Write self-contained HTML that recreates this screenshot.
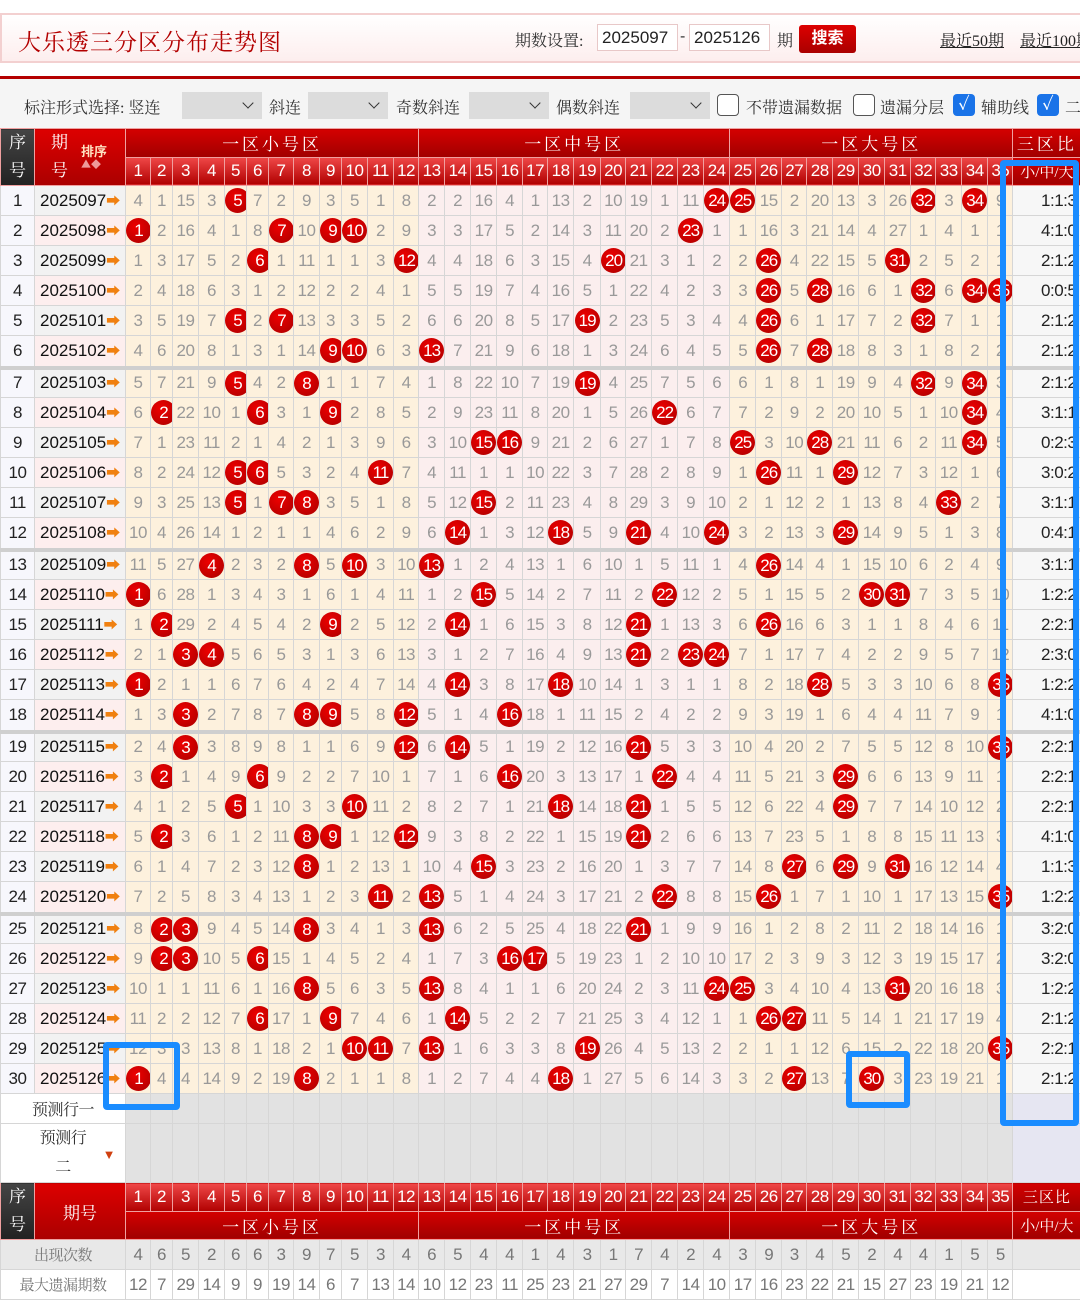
<!DOCTYPE html>
<html><head><meta charset="utf-8">
<style>
*{margin:0;padding:0;box-sizing:border-box}
body{width:1080px;height:1289px;overflow:hidden;background:#fff;font-family:"Liberation Sans","Noto Sans CJK SC",sans-serif;position:relative}
.cn{font-family:"Liberation Serif","Noto Serif CJK SC",serif}
#top{position:absolute;left:0;top:13px;width:1090px;height:50px;border:2px solid #f3d0d0;background:linear-gradient(#fff,#fdeeee);}
#top .t{position:absolute;left:16px;top:9px;font-size:23px;color:#b30000;letter-spacing:1px}
#top .l{position:absolute;top:13px;font-size:16px;color:#333}
#top .in{position:absolute;top:9px;height:27px;border:1px solid #e8c8c8;background:#fff;font-size:17px;padding:3px 4px;color:#222}
#top .btn{position:absolute;left:797px;top:10px;width:57px;height:28px;background:linear-gradient(#d00,#a00);color:#fff;font-size:16px;font-weight:bold;text-align:center;line-height:27px;border-radius:3px}
#top a{position:absolute;top:13px;font-size:16px;color:#222;text-decoration:underline;white-space:nowrap}
#redline{position:absolute;left:0;top:76px;width:1080px;height:3px;background:#b40000}
#filt{position:absolute;left:0;top:79px;width:1080px;height:49px;background:#f5f5f5}
#filt span{position:absolute;top:16px;font-size:16px;color:#333}
#filt .sel{position:absolute;top:13px;height:27px;background:#dcdcdc}
#filt .sel:after{content:"";position:absolute;right:10px;top:7px;width:7px;height:7px;border-right:1.5px solid #333;border-bottom:1.5px solid #333;transform:rotate(45deg)}
#filt .cb{position:absolute;top:15px;width:22px;height:22px;border:1.5px solid #555;border-radius:4px;background:#fff}
#filt .ck{position:absolute;top:15px;width:22px;height:22px;border-radius:4px;background:#1a73e8;color:#fff;font-size:17px;text-align:center;line-height:22px;font-weight:bold}
table{position:absolute;left:0;top:128px;border-collapse:collapse;table-layout:fixed;width:1080px}
td{border:1px solid #d6d6d6;text-align:center;font-size:17px;color:#999;height:30px;padding:0;white-space:nowrap;overflow:hidden;letter-spacing:-0.5px}
td.s{color:#222;background:#f7f7fc}
td.p{color:#111;text-align:left;padding-left:5px;letter-spacing:0}
tr:nth-child(odd) td.p{background:#f2f2f2}
tr:nth-child(even) td.p{background:#fdeeee}
td.p i{font-style:normal;color:#f08010;font-size:14px;font-weight:bold}
td.r{color:#222;background:#f7f7f7;text-align:right;padding-right:4px}
td b{display:inline-block;width:25px;height:25px;border-radius:50%;background:radial-gradient(circle at 40% 35%,#e00,#a80000);color:#fff;font-weight:normal;line-height:25px;font-size:17px;letter-spacing:-1px;vertical-align:middle}
tr.g td{border-bottom:4px solid #cfcfcf;height:32px}
th{font-weight:normal;color:#fff;border:1px solid #f0a0a0;font-size:17px;padding:0}
th.z{background:linear-gradient(#d40000,#a00000);height:28px;letter-spacing:3px}
th.n{background:linear-gradient(#f04848,#b00000);height:27px;letter-spacing:-0.5px}
th.dk{background:linear-gradient(#444,#222);line-height:28px}
th.rd{background:linear-gradient(#d00,#a00)}
.pr td{background:#e2e2e2}
.pr td.lb{background:#fff;color:#333;font-size:16px}
.pr td.lv{background:#e6e6f2}
.cnt td{background:#e8e8e8;color:#777}
.mx td{background:#fff;color:#777}
.box{position:absolute;border:6px solid #1a8cff;border-radius:4px}
</style></head><body>
<div id="top">
<div class="t cn">大乐透三分区分布走势图</div>
<div class="l cn" style="left:513px">期数设置:</div>
<div class="in" style="left:595px;width:81px">2025097</div>
<div class="l" style="left:678px">-</div>
<div class="in" style="left:687px;width:81px">2025126</div>
<div class="l cn" style="left:775px">期</div>
<div class="btn">搜索</div>
<a class="cn" style="left:938px">最近50期</a>
<a class="cn" style="left:1018px">最近100期</a>
</div>
<div id="redline"></div>
<div id="filt" class="cn">
<span style="left:24px">标注形式选择: 竖连</span><div class="sel" style="left:182px;width:80px"></div>
<span style="left:269px">斜连</span><div class="sel" style="left:308px;width:80px"></div>
<span style="left:396px">奇数斜连</span><div class="sel" style="left:469px;width:80px"></div>
<span style="left:556px">偶数斜连</span><div class="sel" style="left:630px;width:80px"></div>
<div class="cb" style="left:717px"></div><span style="left:746px">不带遗漏数据</span>
<div class="cb" style="left:853px"></div><span style="left:880px">遗漏分层</span>
<div class="ck" style="left:953px">✓</div><span style="left:981px">辅助线</span>
<div class="ck" style="left:1037px">✓</div><span style="left:1065px">二</span>
</div>

<table>
<colgroup><col style="width:34px"><col style="width:91px">
<col style="width:25px;background:#fdf1dd"><col style="width:22px;background:#fdf1dd"><col style="width:26px;background:#fdf1dd"><col style="width:26px;background:#fdf1dd"><col style="width:22px;background:#fdf1dd"><col style="width:22px;background:#fdf1dd"><col style="width:25px;background:#fdf1dd"><col style="width:26px;background:#fdf1dd"><col style="width:22px;background:#fdf1dd"><col style="width:26px;background:#fdf1dd"><col style="width:26px;background:#fdf1dd"><col style="width:25px;background:#fdf1dd">
<col style="width:26px;background:#fbeeee"><col style="width:26px;background:#fbeeee"><col style="width:26px;background:#fbeeee"><col style="width:26px;background:#fbeeee"><col style="width:25px;background:#fbeeee"><col style="width:26px;background:#fbeeee"><col style="width:27px;background:#fbeeee"><col style="width:25px;background:#fbeeee"><col style="width:26px;background:#fbeeee"><col style="width:26px;background:#fbeeee"><col style="width:26px;background:#fbeeee"><col style="width:26px;background:#fbeeee">
<col style="width:26px;background:#fdf1dd"><col style="width:26px;background:#fdf1dd"><col style="width:25px;background:#fdf1dd"><col style="width:26px;background:#fdf1dd"><col style="width:26px;background:#fdf1dd"><col style="width:26px;background:#fdf1dd"><col style="width:26px;background:#fdf1dd"><col style="width:25px;background:#fdf1dd"><col style="width:26px;background:#fdf1dd"><col style="width:26px;background:#fdf1dd"><col style="width:25px;background:#fdf1dd">
<col style="width:68px"></colgroup>
<tr><th class="dk cn" rowspan="2">序<br>号</th><th class="rd cn" rowspan="2" style="text-align:left;padding-left:16px;line-height:28px;position:relative">期<br>号<span style="position:absolute;left:46px;top:14px;font-size:13px;color:#ffe0c0;font-weight:bold;font-family:'Noto Sans CJK SC',sans-serif;line-height:16px">排序<br><span style="font-size:10px;color:#e99;line-height:10px;position:absolute;left:0;top:16px">▲◆</span></span></th><th class="z cn" colspan="12">一区小号区</th><th class="z cn" colspan="12">一区中号区</th><th class="z cn" colspan="11">一区大号区</th><th class="z cn">三区比</th></tr>
<tr><th class="n">1</th><th class="n">2</th><th class="n">3</th><th class="n">4</th><th class="n">5</th><th class="n">6</th><th class="n">7</th><th class="n">8</th><th class="n">9</th><th class="n">10</th><th class="n">11</th><th class="n">12</th><th class="n">13</th><th class="n">14</th><th class="n">15</th><th class="n">16</th><th class="n">17</th><th class="n">18</th><th class="n">19</th><th class="n">20</th><th class="n">21</th><th class="n">22</th><th class="n">23</th><th class="n">24</th><th class="n">25</th><th class="n">26</th><th class="n">27</th><th class="n">28</th><th class="n">29</th><th class="n">30</th><th class="n">31</th><th class="n">32</th><th class="n">33</th><th class="n">34</th><th class="n">35</th><th class="z cn" style="font-size:15px;letter-spacing:0">小/中/大</th></tr>

<tr><td class="s">1</td><td class="p">2025097<i>➡</i></td><td>4</td><td>1</td><td>15</td><td>3</td><td><b>5</b></td><td>7</td><td>2</td><td>9</td><td>3</td><td>5</td><td>1</td><td>8</td><td>2</td><td>2</td><td>16</td><td>4</td><td>1</td><td>13</td><td>2</td><td>10</td><td>19</td><td>1</td><td>11</td><td><b>24</b></td><td><b>25</b></td><td>15</td><td>2</td><td>20</td><td>13</td><td>3</td><td>26</td><td><b>32</b></td><td>3</td><td><b>34</b></td><td>9</td><td class="r">1:1:3</td></tr>
<tr><td class="s">2</td><td class="p">2025098<i>➡</i></td><td><b>1</b></td><td>2</td><td>16</td><td>4</td><td>1</td><td>8</td><td><b>7</b></td><td>10</td><td><b>9</b></td><td><b>10</b></td><td>2</td><td>9</td><td>3</td><td>3</td><td>17</td><td>5</td><td>2</td><td>14</td><td>3</td><td>11</td><td>20</td><td>2</td><td><b>23</b></td><td>1</td><td>1</td><td>16</td><td>3</td><td>21</td><td>14</td><td>4</td><td>27</td><td>1</td><td>4</td><td>1</td><td>1</td><td class="r">4:1:0</td></tr>
<tr><td class="s">3</td><td class="p">2025099<i>➡</i></td><td>1</td><td>3</td><td>17</td><td>5</td><td>2</td><td><b>6</b></td><td>1</td><td>11</td><td>1</td><td>1</td><td>3</td><td><b>12</b></td><td>4</td><td>4</td><td>18</td><td>6</td><td>3</td><td>15</td><td>4</td><td><b>20</b></td><td>21</td><td>3</td><td>1</td><td>2</td><td>2</td><td><b>26</b></td><td>4</td><td>22</td><td>15</td><td>5</td><td><b>31</b></td><td>2</td><td>5</td><td>2</td><td>1</td><td class="r">2:1:2</td></tr>
<tr><td class="s">4</td><td class="p">2025100<i>➡</i></td><td>2</td><td>4</td><td>18</td><td>6</td><td>3</td><td>1</td><td>2</td><td>12</td><td>2</td><td>2</td><td>4</td><td>1</td><td>5</td><td>5</td><td>19</td><td>7</td><td>4</td><td>16</td><td>5</td><td>1</td><td>22</td><td>4</td><td>2</td><td>3</td><td>3</td><td><b>26</b></td><td>5</td><td><b>28</b></td><td>16</td><td>6</td><td>1</td><td><b>32</b></td><td>6</td><td><b>34</b></td><td><b>35</b></td><td class="r">0:0:5</td></tr>
<tr><td class="s">5</td><td class="p">2025101<i>➡</i></td><td>3</td><td>5</td><td>19</td><td>7</td><td><b>5</b></td><td>2</td><td><b>7</b></td><td>13</td><td>3</td><td>3</td><td>5</td><td>2</td><td>6</td><td>6</td><td>20</td><td>8</td><td>5</td><td>17</td><td><b>19</b></td><td>2</td><td>23</td><td>5</td><td>3</td><td>4</td><td>4</td><td><b>26</b></td><td>6</td><td>1</td><td>17</td><td>7</td><td>2</td><td><b>32</b></td><td>7</td><td>1</td><td>1</td><td class="r">2:1:2</td></tr>
<tr class="g"><td class="s">6</td><td class="p">2025102<i>➡</i></td><td>4</td><td>6</td><td>20</td><td>8</td><td>1</td><td>3</td><td>1</td><td>14</td><td><b>9</b></td><td><b>10</b></td><td>6</td><td>3</td><td><b>13</b></td><td>7</td><td>21</td><td>9</td><td>6</td><td>18</td><td>1</td><td>3</td><td>24</td><td>6</td><td>4</td><td>5</td><td>5</td><td><b>26</b></td><td>7</td><td><b>28</b></td><td>18</td><td>8</td><td>3</td><td>1</td><td>8</td><td>2</td><td>2</td><td class="r">2:1:2</td></tr>
<tr><td class="s">7</td><td class="p">2025103<i>➡</i></td><td>5</td><td>7</td><td>21</td><td>9</td><td><b>5</b></td><td>4</td><td>2</td><td><b>8</b></td><td>1</td><td>1</td><td>7</td><td>4</td><td>1</td><td>8</td><td>22</td><td>10</td><td>7</td><td>19</td><td><b>19</b></td><td>4</td><td>25</td><td>7</td><td>5</td><td>6</td><td>6</td><td>1</td><td>8</td><td>1</td><td>19</td><td>9</td><td>4</td><td><b>32</b></td><td>9</td><td><b>34</b></td><td>3</td><td class="r">2:1:2</td></tr>
<tr><td class="s">8</td><td class="p">2025104<i>➡</i></td><td>6</td><td><b>2</b></td><td>22</td><td>10</td><td>1</td><td><b>6</b></td><td>3</td><td>1</td><td><b>9</b></td><td>2</td><td>8</td><td>5</td><td>2</td><td>9</td><td>23</td><td>11</td><td>8</td><td>20</td><td>1</td><td>5</td><td>26</td><td><b>22</b></td><td>6</td><td>7</td><td>7</td><td>2</td><td>9</td><td>2</td><td>20</td><td>10</td><td>5</td><td>1</td><td>10</td><td><b>34</b></td><td>4</td><td class="r">3:1:1</td></tr>
<tr><td class="s">9</td><td class="p">2025105<i>➡</i></td><td>7</td><td>1</td><td>23</td><td>11</td><td>2</td><td>1</td><td>4</td><td>2</td><td>1</td><td>3</td><td>9</td><td>6</td><td>3</td><td>10</td><td><b>15</b></td><td><b>16</b></td><td>9</td><td>21</td><td>2</td><td>6</td><td>27</td><td>1</td><td>7</td><td>8</td><td><b>25</b></td><td>3</td><td>10</td><td><b>28</b></td><td>21</td><td>11</td><td>6</td><td>2</td><td>11</td><td><b>34</b></td><td>5</td><td class="r">0:2:3</td></tr>
<tr><td class="s">10</td><td class="p">2025106<i>➡</i></td><td>8</td><td>2</td><td>24</td><td>12</td><td><b>5</b></td><td><b>6</b></td><td>5</td><td>3</td><td>2</td><td>4</td><td><b>11</b></td><td>7</td><td>4</td><td>11</td><td>1</td><td>1</td><td>10</td><td>22</td><td>3</td><td>7</td><td>28</td><td>2</td><td>8</td><td>9</td><td>1</td><td><b>26</b></td><td>11</td><td>1</td><td><b>29</b></td><td>12</td><td>7</td><td>3</td><td>12</td><td>1</td><td>6</td><td class="r">3:0:2</td></tr>
<tr><td class="s">11</td><td class="p">2025107<i>➡</i></td><td>9</td><td>3</td><td>25</td><td>13</td><td><b>5</b></td><td>1</td><td><b>7</b></td><td><b>8</b></td><td>3</td><td>5</td><td>1</td><td>8</td><td>5</td><td>12</td><td><b>15</b></td><td>2</td><td>11</td><td>23</td><td>4</td><td>8</td><td>29</td><td>3</td><td>9</td><td>10</td><td>2</td><td>1</td><td>12</td><td>2</td><td>1</td><td>13</td><td>8</td><td>4</td><td><b>33</b></td><td>2</td><td>7</td><td class="r">3:1:1</td></tr>
<tr class="g"><td class="s">12</td><td class="p">2025108<i>➡</i></td><td>10</td><td>4</td><td>26</td><td>14</td><td>1</td><td>2</td><td>1</td><td>1</td><td>4</td><td>6</td><td>2</td><td>9</td><td>6</td><td><b>14</b></td><td>1</td><td>3</td><td>12</td><td><b>18</b></td><td>5</td><td>9</td><td><b>21</b></td><td>4</td><td>10</td><td><b>24</b></td><td>3</td><td>2</td><td>13</td><td>3</td><td><b>29</b></td><td>14</td><td>9</td><td>5</td><td>1</td><td>3</td><td>8</td><td class="r">0:4:1</td></tr>
<tr><td class="s">13</td><td class="p">2025109<i>➡</i></td><td>11</td><td>5</td><td>27</td><td><b>4</b></td><td>2</td><td>3</td><td>2</td><td><b>8</b></td><td>5</td><td><b>10</b></td><td>3</td><td>10</td><td><b>13</b></td><td>1</td><td>2</td><td>4</td><td>13</td><td>1</td><td>6</td><td>10</td><td>1</td><td>5</td><td>11</td><td>1</td><td>4</td><td><b>26</b></td><td>14</td><td>4</td><td>1</td><td>15</td><td>10</td><td>6</td><td>2</td><td>4</td><td>9</td><td class="r">3:1:1</td></tr>
<tr><td class="s">14</td><td class="p">2025110<i>➡</i></td><td><b>1</b></td><td>6</td><td>28</td><td>1</td><td>3</td><td>4</td><td>3</td><td>1</td><td>6</td><td>1</td><td>4</td><td>11</td><td>1</td><td>2</td><td><b>15</b></td><td>5</td><td>14</td><td>2</td><td>7</td><td>11</td><td>2</td><td><b>22</b></td><td>12</td><td>2</td><td>5</td><td>1</td><td>15</td><td>5</td><td>2</td><td><b>30</b></td><td><b>31</b></td><td>7</td><td>3</td><td>5</td><td>10</td><td class="r">1:2:2</td></tr>
<tr><td class="s">15</td><td class="p">2025111<i>➡</i></td><td>1</td><td><b>2</b></td><td>29</td><td>2</td><td>4</td><td>5</td><td>4</td><td>2</td><td><b>9</b></td><td>2</td><td>5</td><td>12</td><td>2</td><td><b>14</b></td><td>1</td><td>6</td><td>15</td><td>3</td><td>8</td><td>12</td><td><b>21</b></td><td>1</td><td>13</td><td>3</td><td>6</td><td><b>26</b></td><td>16</td><td>6</td><td>3</td><td>1</td><td>1</td><td>8</td><td>4</td><td>6</td><td>11</td><td class="r">2:2:1</td></tr>
<tr><td class="s">16</td><td class="p">2025112<i>➡</i></td><td>2</td><td>1</td><td><b>3</b></td><td><b>4</b></td><td>5</td><td>6</td><td>5</td><td>3</td><td>1</td><td>3</td><td>6</td><td>13</td><td>3</td><td>1</td><td>2</td><td>7</td><td>16</td><td>4</td><td>9</td><td>13</td><td><b>21</b></td><td>2</td><td><b>23</b></td><td><b>24</b></td><td>7</td><td>1</td><td>17</td><td>7</td><td>4</td><td>2</td><td>2</td><td>9</td><td>5</td><td>7</td><td>12</td><td class="r">2:3:0</td></tr>
<tr><td class="s">17</td><td class="p">2025113<i>➡</i></td><td><b>1</b></td><td>2</td><td>1</td><td>1</td><td>6</td><td>7</td><td>6</td><td>4</td><td>2</td><td>4</td><td>7</td><td>14</td><td>4</td><td><b>14</b></td><td>3</td><td>8</td><td>17</td><td><b>18</b></td><td>10</td><td>14</td><td>1</td><td>3</td><td>1</td><td>1</td><td>8</td><td>2</td><td>18</td><td><b>28</b></td><td>5</td><td>3</td><td>3</td><td>10</td><td>6</td><td>8</td><td><b>35</b></td><td class="r">1:2:2</td></tr>
<tr class="g"><td class="s">18</td><td class="p">2025114<i>➡</i></td><td>1</td><td>3</td><td><b>3</b></td><td>2</td><td>7</td><td>8</td><td>7</td><td><b>8</b></td><td><b>9</b></td><td>5</td><td>8</td><td><b>12</b></td><td>5</td><td>1</td><td>4</td><td><b>16</b></td><td>18</td><td>1</td><td>11</td><td>15</td><td>2</td><td>4</td><td>2</td><td>2</td><td>9</td><td>3</td><td>19</td><td>1</td><td>6</td><td>4</td><td>4</td><td>11</td><td>7</td><td>9</td><td>1</td><td class="r">4:1:0</td></tr>
<tr><td class="s">19</td><td class="p">2025115<i>➡</i></td><td>2</td><td>4</td><td><b>3</b></td><td>3</td><td>8</td><td>9</td><td>8</td><td>1</td><td>1</td><td>6</td><td>9</td><td><b>12</b></td><td>6</td><td><b>14</b></td><td>5</td><td>1</td><td>19</td><td>2</td><td>12</td><td>16</td><td><b>21</b></td><td>5</td><td>3</td><td>3</td><td>10</td><td>4</td><td>20</td><td>2</td><td>7</td><td>5</td><td>5</td><td>12</td><td>8</td><td>10</td><td><b>35</b></td><td class="r">2:2:1</td></tr>
<tr><td class="s">20</td><td class="p">2025116<i>➡</i></td><td>3</td><td><b>2</b></td><td>1</td><td>4</td><td>9</td><td><b>6</b></td><td>9</td><td>2</td><td>2</td><td>7</td><td>10</td><td>1</td><td>7</td><td>1</td><td>6</td><td><b>16</b></td><td>20</td><td>3</td><td>13</td><td>17</td><td>1</td><td><b>22</b></td><td>4</td><td>4</td><td>11</td><td>5</td><td>21</td><td>3</td><td><b>29</b></td><td>6</td><td>6</td><td>13</td><td>9</td><td>11</td><td>1</td><td class="r">2:2:1</td></tr>
<tr><td class="s">21</td><td class="p">2025117<i>➡</i></td><td>4</td><td>1</td><td>2</td><td>5</td><td><b>5</b></td><td>1</td><td>10</td><td>3</td><td>3</td><td><b>10</b></td><td>11</td><td>2</td><td>8</td><td>2</td><td>7</td><td>1</td><td>21</td><td><b>18</b></td><td>14</td><td>18</td><td><b>21</b></td><td>1</td><td>5</td><td>5</td><td>12</td><td>6</td><td>22</td><td>4</td><td><b>29</b></td><td>7</td><td>7</td><td>14</td><td>10</td><td>12</td><td>2</td><td class="r">2:2:1</td></tr>
<tr><td class="s">22</td><td class="p">2025118<i>➡</i></td><td>5</td><td><b>2</b></td><td>3</td><td>6</td><td>1</td><td>2</td><td>11</td><td><b>8</b></td><td><b>9</b></td><td>1</td><td>12</td><td><b>12</b></td><td>9</td><td>3</td><td>8</td><td>2</td><td>22</td><td>1</td><td>15</td><td>19</td><td><b>21</b></td><td>2</td><td>6</td><td>6</td><td>13</td><td>7</td><td>23</td><td>5</td><td>1</td><td>8</td><td>8</td><td>15</td><td>11</td><td>13</td><td>3</td><td class="r">4:1:0</td></tr>
<tr><td class="s">23</td><td class="p">2025119<i>➡</i></td><td>6</td><td>1</td><td>4</td><td>7</td><td>2</td><td>3</td><td>12</td><td><b>8</b></td><td>1</td><td>2</td><td>13</td><td>1</td><td>10</td><td>4</td><td><b>15</b></td><td>3</td><td>23</td><td>2</td><td>16</td><td>20</td><td>1</td><td>3</td><td>7</td><td>7</td><td>14</td><td>8</td><td><b>27</b></td><td>6</td><td><b>29</b></td><td>9</td><td><b>31</b></td><td>16</td><td>12</td><td>14</td><td>4</td><td class="r">1:1:3</td></tr>
<tr class="g"><td class="s">24</td><td class="p">2025120<i>➡</i></td><td>7</td><td>2</td><td>5</td><td>8</td><td>3</td><td>4</td><td>13</td><td>1</td><td>2</td><td>3</td><td><b>11</b></td><td>2</td><td><b>13</b></td><td>5</td><td>1</td><td>4</td><td>24</td><td>3</td><td>17</td><td>21</td><td>2</td><td><b>22</b></td><td>8</td><td>8</td><td>15</td><td><b>26</b></td><td>1</td><td>7</td><td>1</td><td>10</td><td>1</td><td>17</td><td>13</td><td>15</td><td><b>35</b></td><td class="r">1:2:2</td></tr>
<tr><td class="s">25</td><td class="p">2025121<i>➡</i></td><td>8</td><td><b>2</b></td><td><b>3</b></td><td>9</td><td>4</td><td>5</td><td>14</td><td><b>8</b></td><td>3</td><td>4</td><td>1</td><td>3</td><td><b>13</b></td><td>6</td><td>2</td><td>5</td><td>25</td><td>4</td><td>18</td><td>22</td><td><b>21</b></td><td>1</td><td>9</td><td>9</td><td>16</td><td>1</td><td>2</td><td>8</td><td>2</td><td>11</td><td>2</td><td>18</td><td>14</td><td>16</td><td>1</td><td class="r">3:2:0</td></tr>
<tr><td class="s">26</td><td class="p">2025122<i>➡</i></td><td>9</td><td><b>2</b></td><td><b>3</b></td><td>10</td><td>5</td><td><b>6</b></td><td>15</td><td>1</td><td>4</td><td>5</td><td>2</td><td>4</td><td>1</td><td>7</td><td>3</td><td><b>16</b></td><td><b>17</b></td><td>5</td><td>19</td><td>23</td><td>1</td><td>2</td><td>10</td><td>10</td><td>17</td><td>2</td><td>3</td><td>9</td><td>3</td><td>12</td><td>3</td><td>19</td><td>15</td><td>17</td><td>2</td><td class="r">3:2:0</td></tr>
<tr><td class="s">27</td><td class="p">2025123<i>➡</i></td><td>10</td><td>1</td><td>1</td><td>11</td><td>6</td><td>1</td><td>16</td><td><b>8</b></td><td>5</td><td>6</td><td>3</td><td>5</td><td><b>13</b></td><td>8</td><td>4</td><td>1</td><td>1</td><td>6</td><td>20</td><td>24</td><td>2</td><td>3</td><td>11</td><td><b>24</b></td><td><b>25</b></td><td>3</td><td>4</td><td>10</td><td>4</td><td>13</td><td><b>31</b></td><td>20</td><td>16</td><td>18</td><td>3</td><td class="r">1:2:2</td></tr>
<tr><td class="s">28</td><td class="p">2025124<i>➡</i></td><td>11</td><td>2</td><td>2</td><td>12</td><td>7</td><td><b>6</b></td><td>17</td><td>1</td><td><b>9</b></td><td>7</td><td>4</td><td>6</td><td>1</td><td><b>14</b></td><td>5</td><td>2</td><td>2</td><td>7</td><td>21</td><td>25</td><td>3</td><td>4</td><td>12</td><td>1</td><td>1</td><td><b>26</b></td><td><b>27</b></td><td>11</td><td>5</td><td>14</td><td>1</td><td>21</td><td>17</td><td>19</td><td>4</td><td class="r">2:1:2</td></tr>
<tr><td class="s">29</td><td class="p">2025125<i>➡</i></td><td>12</td><td>3</td><td>3</td><td>13</td><td>8</td><td>1</td><td>18</td><td>2</td><td>1</td><td><b>10</b></td><td><b>11</b></td><td>7</td><td><b>13</b></td><td>1</td><td>6</td><td>3</td><td>3</td><td>8</td><td><b>19</b></td><td>26</td><td>4</td><td>5</td><td>13</td><td>2</td><td>2</td><td>1</td><td>1</td><td>12</td><td>6</td><td>15</td><td>2</td><td>22</td><td>18</td><td>20</td><td><b>35</b></td><td class="r">2:2:1</td></tr>
<tr><td class="s">30</td><td class="p">2025126<i>➡</i></td><td><b>1</b></td><td>4</td><td>4</td><td>14</td><td>9</td><td>2</td><td>19</td><td><b>8</b></td><td>2</td><td>1</td><td>1</td><td>8</td><td>1</td><td>2</td><td>7</td><td>4</td><td>4</td><td><b>18</b></td><td>1</td><td>27</td><td>5</td><td>6</td><td>14</td><td>3</td><td>3</td><td>2</td><td><b>27</b></td><td>13</td><td>7</td><td><b>30</b></td><td>3</td><td>23</td><td>19</td><td>21</td><td>1</td><td class="r">2:1:2</td></tr>

<tr class="pr"><td class="lb cn" colspan="2">预测行一</td><td></td><td></td><td></td><td></td><td></td><td></td><td></td><td></td><td></td><td></td><td></td><td></td><td></td><td></td><td></td><td></td><td></td><td></td><td></td><td></td><td></td><td></td><td></td><td></td><td></td><td></td><td></td><td></td><td></td><td></td><td></td><td></td><td></td><td></td><td></td><td class="lv"></td></tr>
<tr class="pr" style="height:58px"><td class="lb cn" colspan="2" style="line-height:29px;position:relative">预测行<br>二<span style="position:absolute;right:10px;top:16px;color:#d04010;font-size:13px">▼</span></td><td></td><td></td><td></td><td></td><td></td><td></td><td></td><td></td><td></td><td></td><td></td><td></td><td></td><td></td><td></td><td></td><td></td><td></td><td></td><td></td><td></td><td></td><td></td><td></td><td></td><td></td><td></td><td></td><td></td><td></td><td></td><td></td><td></td><td></td><td></td><td class="lv"></td></tr>

<tr><th class="dk cn" rowspan="2">序<br>号</th><th class="rd cn" rowspan="2">期号</th><th class="n">1</th><th class="n">2</th><th class="n">3</th><th class="n">4</th><th class="n">5</th><th class="n">6</th><th class="n">7</th><th class="n">8</th><th class="n">9</th><th class="n">10</th><th class="n">11</th><th class="n">12</th><th class="n">13</th><th class="n">14</th><th class="n">15</th><th class="n">16</th><th class="n">17</th><th class="n">18</th><th class="n">19</th><th class="n">20</th><th class="n">21</th><th class="n">22</th><th class="n">23</th><th class="n">24</th><th class="n">25</th><th class="n">26</th><th class="n">27</th><th class="n">28</th><th class="n">29</th><th class="n">30</th><th class="n">31</th><th class="n">32</th><th class="n">33</th><th class="n">34</th><th class="n">35</th><th class="z cn" style="font-size:15px;letter-spacing:1px">三区比</th></tr>
<tr><th class="z cn" colspan="12">一区小号区</th><th class="z cn" colspan="12">一区中号区</th><th class="z cn" colspan="11">一区大号区</th><th class="z cn" style="font-size:15px;letter-spacing:0">小/中/大</th></tr>
<tr class="cnt"><td class="cn" colspan="2" style="font-size:15px">出现次数</td><td>4</td><td>6</td><td>5</td><td>2</td><td>6</td><td>6</td><td>3</td><td>9</td><td>7</td><td>5</td><td>3</td><td>4</td><td>6</td><td>5</td><td>4</td><td>4</td><td>1</td><td>4</td><td>3</td><td>1</td><td>7</td><td>4</td><td>2</td><td>4</td><td>3</td><td>9</td><td>3</td><td>4</td><td>5</td><td>2</td><td>4</td><td>4</td><td>1</td><td>5</td><td>5</td><td></td></tr>
<tr class="mx"><td class="cn" colspan="2" style="font-size:15px">最大遗漏期数</td><td>12</td><td>7</td><td>29</td><td>14</td><td>9</td><td>9</td><td>19</td><td>14</td><td>6</td><td>7</td><td>13</td><td>14</td><td>10</td><td>12</td><td>23</td><td>11</td><td>25</td><td>23</td><td>21</td><td>27</td><td>29</td><td>7</td><td>14</td><td>10</td><td>17</td><td>16</td><td>23</td><td>22</td><td>21</td><td>15</td><td>27</td><td>23</td><td>19</td><td>21</td><td>12</td><td></td></tr>
</table>

<div class="box" style="left:103px;top:1042px;width:77px;height:68px"></div>
<div class="box" style="left:846px;top:1051px;width:64px;height:57px"></div>
<div class="box" style="left:1000px;top:160px;width:79px;height:966px"></div>
</body></html>
